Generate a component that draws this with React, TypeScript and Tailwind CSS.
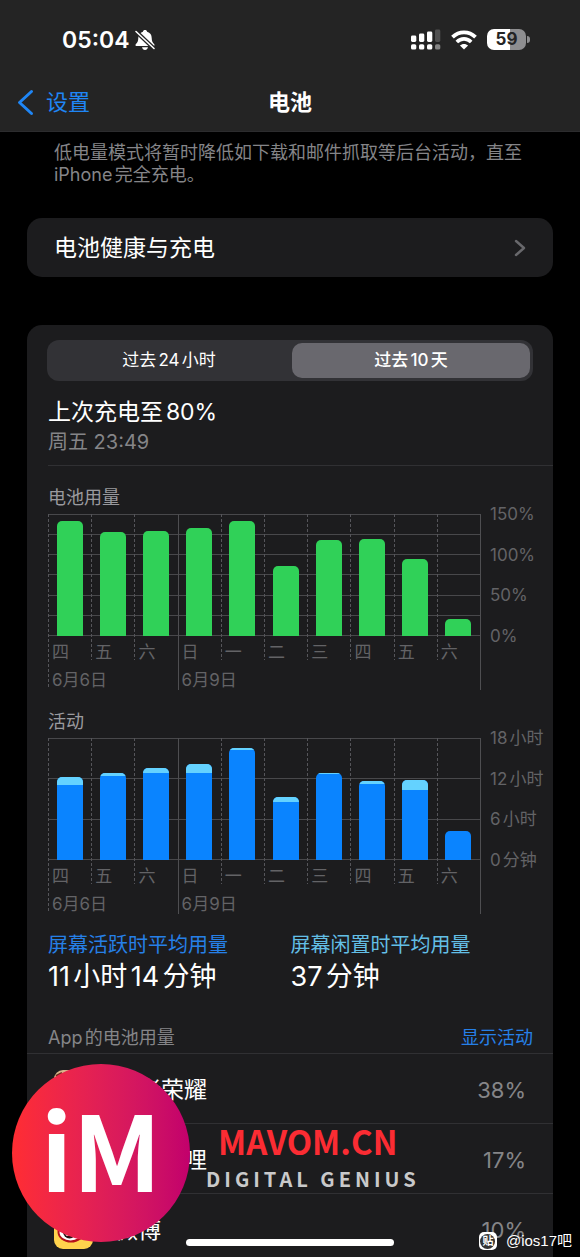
import { useState } from "react";

type Bar = { day: string; total: number; idle?: number };

const batteryBars: Bar[] = [
  { day: "四", total: 141.5 },
  { day: "五", total: 128 },
  { day: "六", total: 129 },
  { day: "日", total: 132.5 },
  { day: "一", total: 141.5 },
  { day: "二", total: 86 },
  { day: "三", total: 117.5 },
  { day: "四", total: 119 },
  { day: "五", total: 95 },
  { day: "六", total: 21 },
];

const activityBars: Bar[] = [
  { day: "四", total: 12.2, idle: 1.1 },
  { day: "五", total: 12.8, idle: 0.35 },
  { day: "六", total: 13.6, idle: 0.7 },
  { day: "日", total: 14.1, idle: 1.3 },
  { day: "一", total: 16.6, idle: 0.3 },
  { day: "二", total: 9.3, idle: 0.7 },
  { day: "三", total: 12.9, idle: 0.1 },
  { day: "四", total: 11.7, idle: 0.5 },
  { day: "五", total: 11.8, idle: 1.5 },
  { day: "六", total: 4.3 },
];

const dashed =
  "bg-[repeating-linear-gradient(to_bottom,#55555a_0_3px,transparent_3px_5px)]";

function UsageChart({
  title,
  bars,
  max,
  lines,
  axis,
  barClass,
}: {
  title: string;
  bars: Bar[];
  max: number;
  lines: number;
  axis: string[];
  barClass: string;
}) {
  return (
    <section>
      <h2 className="text-[18px] leading-6 text-[#9a9a9e]">{title}</h2>
      <div className="mt-1 flex text-[17px] text-[#636366]">
        <div className="relative min-w-0 flex-1">
          <div className="relative h-[122px]">
            <div className="absolute inset-0 flex flex-col justify-between">
              {Array.from({ length: lines }, (_, i) => (
                <div key={i} className="h-px bg-[#48484b]" />
              ))}
            </div>
            <div className="relative flex h-full items-end">
              {bars.map((bar, i) => (
                <div key={i} className="flex h-full flex-1 items-end justify-center">
                  <div
                    className={`flex w-3/5 flex-col overflow-hidden rounded-t-[5px] ${barClass}`}
                    style={{ height: `${(bar.total / max) * 100}%` }}
                  >
                    {bar.idle ? (
                      <div
                        className="bg-[#64d2ff]"
                        style={{ height: `${(bar.idle / bar.total) * 100}%` }}
                      />
                    ) : null}
                  </div>
                </div>
              ))}
            </div>
          </div>
          <div className="flex leading-8">
            {bars.map((bar, i) => (
              <span key={i} className="flex-1 pl-1">
                {bar.day}
              </span>
            ))}
          </div>
          <div className="grid grid-cols-10 leading-6">
            <span className="col-span-3 pl-1">6月6日</span>
            <span className="col-span-7 pl-1">6月9日</span>
          </div>
          <div className="pointer-events-none absolute inset-0 flex">
            {bars.map((_, i) => (
              <div key={i} className="flex-1">
                <div
                  className={`w-px ${
                    i === 0
                      ? `h-[174px] ${dashed}`
                      : i === 3
                        ? "h-[176px] bg-[#4e4e51]"
                        : `h-[146px] ${dashed}`
                  }`}
                />
              </div>
            ))}
            <div className="-mr-px h-[176px] w-px bg-[#4e4e51]" />
          </div>
        </div>
        <div className="-mt-2 flex h-[138px] w-[73px] flex-col justify-between pl-[10px] leading-4 whitespace-nowrap [text-autospace:normal]">
          {axis.map((label) => (
            <span key={label}>{label}</span>
          ))}
        </div>
      </div>
    </section>
  );
}

function BellSlash() {
  return (
    <svg className="size-[22px]" viewBox="0 0 22 22" aria-hidden="true">
      <path
        fill="#fff"
        d="M11 1c1.200 0 1.900.7 2.100 1.700 3.100.9 4.600 3.100 4.600 6.200 0 3.200 1 4.600 2.400 6 .8.9.4 2.100-.9 2.100H2.800c-1.300 0-1.700-1.200-.9-2.100 1.400-1.400 2.400-2.800 2.400-6 0-3.100 1.500-5.300 4.600-6.200C9.100 1.700 9.800 1 11 1zM8 18.300h6c-.3 1.600-1.500 2.600-3 2.600s-2.700-1-3-2.600z"
      />
      <path d="M2 2.500 20 19.500" stroke="#242424" strokeWidth="4" />
      <path d="M2 2.500 20 19.500" stroke="#fff" strokeWidth="1.600" strokeLinecap="round" />
    </svg>
  );
}

function Signal() {
  return (
    <svg className="h-[21px] w-[30px]" viewBox="0 0 30 21" fill="#fff" aria-hidden="true">
      <rect x="0" y="6.500" width="5.300" height="6.500" rx="1.400" />
      <rect x="8" y="4.500" width="5.300" height="8.500" rx="1.400" />
      <rect x="16" y="2.500" width="5.300" height="10.500" rx="1.400" />
      <rect x="24" y="0.500" width="5.300" height="12.500" rx="1.400" fill="#505050" />
      <rect x="0" y="15.200" width="5.300" height="5.300" rx="1.600" />
      <rect x="8" y="15.200" width="5.300" height="5.300" rx="1.600" />
      <rect x="16" y="15.200" width="5.300" height="5.300" rx="1.600" />
      <rect x="24" y="15.200" width="5.300" height="5.300" rx="1.600" fill="#858585" />
    </svg>
  );
}

function Wifi() {
  return (
    <svg className="h-[20px] w-[26px]" viewBox="0 0 26 20" fill="none" stroke="#fff" aria-hidden="true">
      <path d="M1.500 7.200C8 .8 18 .8 24.500 7.200" strokeWidth="3.800" />
      <path d="M5.800 12c4.200-4.200 10.200-4.200 14.400 0" strokeWidth="3.600" />
      <path d="M13 19.600 8.900 15.600c2.300-2.100 5.900-2.100 8.200 0z" fill="#fff" stroke="none" />
    </svg>
  );
}

function GameIcon() {
  return (
    <svg className="size-[39px] rounded-[9px]" viewBox="0 0 39 39" aria-hidden="true">
      <rect width="39" height="39" fill="#d8b48a" />
      <path d="M3 12C6 4 14 2 20 3M6 15c3-7 9-9 14-8M2 6l6-3" stroke="#6d2c1c" strokeWidth="2" fill="none" />
      <circle cx="20" cy="22" r="12" fill="#8a4a2c" />
    </svg>
  );
}

function VideoIcon() {
  return (
    <svg className="size-[39px] rounded-[9px]" viewBox="0 0 39 39" fill="none" aria-hidden="true">
      <rect width="39" height="39" fill="#fb7299" />
      <rect x="8" y="13" width="23" height="17" rx="4" stroke="#fff" strokeWidth="2.500" />
      <path d="m13 8 4 4m9-4-4 4M15 19v4m9-4v4" stroke="#fff" strokeWidth="2.500" strokeLinecap="round" />
    </svg>
  );
}

function BlogIcon() {
  return (
    <svg className="size-[39px] rounded-[9px]" viewBox="0 0 39 39" aria-hidden="true">
      <rect width="39" height="39" fill="#ffd34d" />
      <ellipse cx="17" cy="22" rx="13.500" ry="10.500" fill="#b5121b" />
      <ellipse cx="16.500" cy="22" rx="11" ry="8.500" fill="#fff" />
      <circle cx="15.500" cy="22" r="6.500" fill="#2a1214" />
      <circle cx="13.500" cy="24" r="2" fill="#fff" />
    </svg>
  );
}

const apps = [
  { name: "王者荣耀", share: "38%", Icon: GameIcon },
  { name: "哔哩哔哩", share: "17%", Icon: VideoIcon },
  { name: "微博", share: "10%", Icon: BlogIcon },
];

export default function App() {
  const [range, setRange] = useState(1);

  return (
    <div className="relative flex h-screen flex-col overflow-hidden bg-black font-['Inter','Noto_Sans_CJK_SC',sans-serif] text-white">
      <header className="shrink-0 border-b border-[#2c2c2e] bg-[#242424]">
        <div className="flex items-center justify-between pt-6 pr-[50px] pl-[62px]">
          <div className="flex h-8 items-center gap-[5px] text-[23px] font-semibold">
            <span>05:04</span>
            <BellSlash />
          </div>
          <div className="flex h-8 items-center gap-[10px] pb-px">
            <Signal />
            <Wifi />
            <div className="flex items-center gap-px">
              <div className="flex h-[21px] w-[39px] items-center justify-center rounded-[7px] bg-[linear-gradient(to_right,#fff_59%,#8e8e90_59%)] text-[17px] font-bold text-[#242424]">
                59
              </div>
              <div className="h-[7px] w-[3px] rounded-r-full bg-[#8e8e90]" />
            </div>
          </div>
        </div>
        <nav className="mt-[18px] grid h-[57px] grid-cols-3 items-center px-[17px] text-[22px]">
          <a href="#settings" className="flex items-center gap-3 text-[#1f86f5]">
            <svg className="h-[27px] w-[17px]" viewBox="0 0 17 27" fill="none" aria-hidden="true">
              <path d="M14.500 2.500 2.500 13.500l12 11" stroke="currentColor" strokeWidth="3" strokeLinecap="round" strokeLinejoin="round" />
            </svg>
            设置
          </a>
          <h1 className="text-center font-bold">电池</h1>
        </nav>
      </header>

      <main className="min-h-0 flex-1 overflow-hidden px-[27px]">
        <p className="pt-[10px] pl-[27px] text-[18px] leading-[22px] text-[#858588] [text-autospace:normal]">
          低电量模式将暂时降低如下载和邮件抓取等后台活动，直至iPhone完全充电。
        </p>

        <a
          href="#health"
          className="mt-8 flex h-[59px] items-center justify-between rounded-[15px] bg-[#1c1c1e] px-[27px] text-[23px]"
        >
          <span className="pt-[2px]">电池健康与充电</span>
          <svg className="h-[18px] w-[12px]" viewBox="0 0 12 18" fill="none" aria-hidden="true">
            <path d="m2 2 8 7-8 7" stroke="#68686c" strokeWidth="2.400" strokeLinecap="round" strokeLinejoin="round" />
          </svg>
        </a>

        <div className="mt-12 rounded-t-[15px] bg-[#1c1c1e] pt-[15px]">
          <div className="px-5">
            <div className="flex h-[41px] gap-1 rounded-xl bg-[#323236] p-[3px] text-[17px] [text-autospace:normal]">
              {["过去24小时", "过去10天"].map((label, i) => (
                <button
                  key={label}
                  type="button"
                  aria-pressed={range === i}
                  onClick={() => setRange(i)}
                  className={`flex-1 rounded-[10px] pt-px ${range === i ? "bg-[#69686e] font-medium" : ""}`}
                >
                  {label}
                </button>
              ))}
            </div>
          </div>

          <div className="pl-[21px]">
            <div className="border-b border-[#303033] pt-[15px] pb-[9px]">
              <p className="text-[23px] leading-8 [text-autospace:normal]">上次充电至80%</p>
              <p className="text-[20px] leading-7 text-[#858588]">周五 23:49</p>
            </div>

            <div className="flex flex-col gap-[18px] pt-5">
              <UsageChart
                title="电池用量"
                bars={batteryBars}
                max={150}
                lines={7}
                axis={["150%", "100%", "50%", "0%"]}
                barClass="bg-[#30d158]"
              />
              <UsageChart
                title="活动"
                bars={activityBars}
                max={18}
                lines={4}
                axis={["18小时", "12小时", "6小时", "0分钟"]}
                barClass="bg-[#0a84ff]"
              />
            </div>

            <dl className="grid grid-cols-2 pt-[15px] pr-5">
              <div>
                <dt className="text-[20px] leading-7 text-[#2680e8]">屏幕活跃时平均用量</dt>
                <dd className="text-[27px] leading-9 [text-autospace:normal]">11小时14分钟</dd>
              </div>
              <div>
                <dt className="text-[20px] leading-7 text-[#63bfe6]">屏幕闲置时平均用量</dt>
                <dd className="text-[27px] leading-9 [text-autospace:normal]">37分钟</dd>
              </div>
            </dl>

            <div className="flex justify-between pt-[31px] pr-5 pb-[3px] text-[18px] leading-6">
              <h2 className="text-[#858588] [text-autospace:normal]">App的电池用量</h2>
              <button type="button" className="text-[#2680e8]">
                显示活动
              </button>
            </div>
          </div>

          <ul className="border-t border-[#303033]">
            {apps.map(({ name, share, Icon }) => (
              <li key={name} className="flex items-center gap-[22px] pl-[27px]">
                <Icon />
                <div className="flex h-[70px] flex-1 items-center justify-between border-b border-[#303033] pt-[3px] pr-[27px] text-[23px]">
                  <span>{name}</span>
                  <span className="text-[22px] text-[#858588]">{share}</span>
                </div>
              </li>
            ))}
          </ul>
        </div>
      </main>

      <div className="absolute bottom-[15px] left-3 flex items-center gap-4">
        <div className="flex size-[178px] items-center justify-center rounded-full bg-linear-to-r from-[#ff2d32] to-[#c2006c] pb-3 font-['Noto_Sans_CJK_SC',sans-serif] text-[104px] leading-none font-bold">
          iM
        </div>
        <div className="pt-3 font-['Noto_Sans_CJK_SC',sans-serif] font-bold whitespace-nowrap">
          <p className="pl-3 text-[33px] leading-10 text-[#fb2c33]">MAVOM.CN</p>
          <p className="text-[20px] leading-9 tracking-[0.2em] text-[#c9c9ca]">DIGITAL GENIUS</p>
        </div>
      </div>

      <div className="absolute bottom-[11px] left-1/2 h-[7px] w-[208px] -translate-x-1/2 rounded-full bg-white" />

      <div className="absolute right-2 bottom-1 flex items-center gap-[9px] text-[15px] leading-6">
        <span className="flex size-[18px] items-center justify-center rounded-[5px] bg-white">
          <span className="flex size-[15px] items-center justify-center rounded-full bg-[#333] text-[11px] leading-none font-bold">
            贴
          </span>
        </span>
        <span className="font-['Liberation_Sans','Noto_Sans_CJK_SC',sans-serif]">@ios17吧</span>
      </div>
    </div>
  );
}
